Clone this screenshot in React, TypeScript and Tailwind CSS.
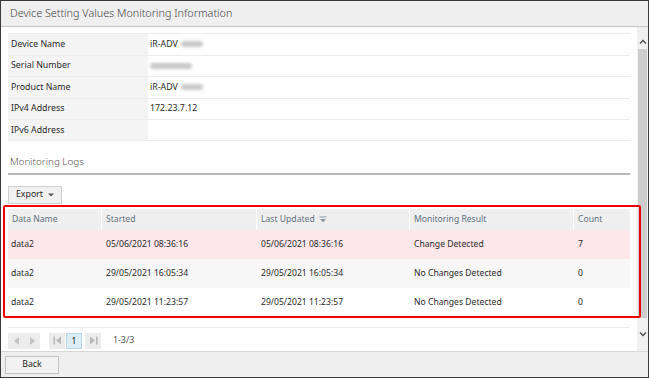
import React from 'react'

// ── Data ──────────────────────────────────────────────────────────────────────

interface InfoRow {
  label: string
  value?: string
  blur?: 'short' | 'long'
}

const infoRows: InfoRow[] = [
  { label: 'Device Name', value: 'iR-ADV', blur: 'short' },
  { label: 'Serial Number', blur: 'long' },
  { label: 'Product Name', value: 'iR-ADV', blur: 'short' },
  { label: 'IPv4 Address', value: '172.23.7.12' },
  { label: 'IPv6 Address' },
]

interface LogRow {
  name: string
  started: string
  updated: string
  result: string
  count: string
}

const logs: LogRow[] = [
  { name: 'data2', started: '05/06/2021 08:36:16', updated: '05/06/2021 08:36:16', result: 'Change Detected', count: '7' },
  { name: 'data2', started: '29/05/2021 16:05:34', updated: '29/05/2021 16:05:34', result: 'No Changes Detected', count: '0' },
  { name: 'data2', started: '29/05/2021 11:23:57', updated: '29/05/2021 11:23:57', result: 'No Changes Detected', count: '0' },
]

const rowBg = ['bg-[#fde7ea]', 'bg-[#f7f7f7]', 'bg-white']

// ── Small pieces ──────────────────────────────────────────────────────────────

function Blurred({ size }: { size: 'short' | 'long' }) {
  return (
    <span
      className={
        size === 'short'
          ? 'inline-block w-[22px] h-[6px] ml-[3px] rounded-full bg-[#c9c9c9] blur-[1.5px]'
          : 'inline-block w-[42px] h-[6px] rounded-full bg-[#c9c9c9] blur-[1.5px]'
      }
    />
  )
}

function SortIcon() {
  return (
    <svg width="8" height="7" viewBox="0 0 8 7" className="ml-[4px]">
      <rect x="0.5" y="0.5" width="7" height="1" fill="#8a96a3" />
      <path d="M1 3 L7 3 L4 6.5 Z" fill="#8a96a3" />
    </svg>
  )
}

function PagerBtn({ children, active }: { children: React.ReactNode; active?: boolean }) {
  return (
    <div
      className={
        active
          ? 'w-[16px] h-[16px] flex items-center justify-center bg-[#dcedf6] border border-[#b5d6e6] text-[8.5px] text-[#222]'
          : 'w-[16px] h-[16px] flex items-center justify-center bg-[#ececec]'
      }
    >
      {children}
    </div>
  )
}

// ── Main ──────────────────────────────────────────────────────────────────────

export default function App() {
  return (
    <div
      className="w-[649px] h-[378px] flex flex-col bg-white border border-[#3a3a3a] overflow-hidden text-[#2a2a2a]"
      style={{ fontFamily: '"Noto Sans", "Open Sans", sans-serif' }}
    >
      {/* Title */}
      <div className="h-[26px] shrink-0 flex items-center px-[9px] bg-[#efefef] border-b border-[#c6c6c6] text-[10.8px] font-light text-[#444]">
        Device Setting Values Monitoring Information
      </div>

      {/* Body */}
      <div className="flex-1 flex min-h-0">
        <div className="relative flex-1 pl-[7px] pr-[7px] pt-[6px]">
          {/* Info table */}
          <div className="text-[8.8px]">
            {infoRows.map((r, i) => (
              <div
                key={r.label}
                className={
                  'flex h-[21.6px] border-t border-[#ececec]' + (i === infoRows.length - 1 ? ' border-b' : '')
                }
              >
                <div className="w-[140px] flex items-center pl-[3px] bg-[#f4f4f4]">{r.label}</div>
                <div className="flex-1 flex items-center pl-[2px]">
                  {r.value}
                  {r.blur && <Blurred size={r.blur} />}
                </div>
              </div>
            ))}
          </div>

          {/* Section heading */}
          <div className="h-[34px] flex items-end pb-[4px] pl-[2px] border-b-2 border-[#b9b9b9] text-[9.9px] font-light text-[#555]">
            Monitoring Logs
          </div>

          {/* Export */}
          <div className="mt-[11px] w-[54px] h-[18px] flex items-center justify-center gap-[5px] bg-[#f1f1f1] border border-[#d0d0d0] text-[8.8px]">
            Export
            <svg width="6" height="4" viewBox="0 0 6 4">
              <path d="M0 0.5 L6 0.5 L3 3.5 Z" fill="#555" />
            </svg>
          </div>

          {/* Logs table */}
          <div className="mt-[5px] text-[8.6px]">
            <div className="flex h-[21px] bg-[#efefef] text-[#5f6f80]">
              <div className="w-[94px] flex items-center pl-[4px] border-r border-white">Data Name</div>
              <div className="w-[155px] flex items-center pl-[4px] border-r border-white">Started</div>
              <div className="w-[153px] flex items-center pl-[4px] border-r border-white">
                Last Updated
                <SortIcon />
              </div>
              <div className="w-[164px] flex items-center pl-[4px] border-r border-white">Monitoring Result</div>
              <div className="flex-1 flex items-center pl-[4px]">Count</div>
            </div>
            {logs.map((l, i) => (
              <div key={i} className={'flex h-[29px] ' + rowBg[i]}>
                <div className="w-[94px] flex items-center pl-[3px]">{l.name}</div>
                <div className="w-[155px] flex items-center pl-[4px]">{l.started}</div>
                <div className="w-[153px] flex items-center pl-[4px]">{l.updated}</div>
                <div className="w-[164px] flex items-center pl-[4px]">{l.result}</div>
                <div className="flex-1 flex items-center pl-[4px]">{l.count}</div>
              </div>
            ))}
          </div>

          {/* Highlight box over the table */}
          <div className="absolute left-[2px] top-[178px] w-[638px] h-[113px] border-2 border-[#f00000] rounded-[2px] pointer-events-none" />

          {/* Pager */}
          <div className="mt-[10px] border-t border-[#ececec] pt-[5px] flex items-center text-[8.8px]">
            <div className="flex">
              <PagerBtn>
                <svg width="7" height="8" viewBox="0 0 7 8"><path d="M6 0 L6 8 L1 4 Z" fill="#c4c4c4" /></svg>
              </PagerBtn>
              <PagerBtn>
                <svg width="7" height="8" viewBox="0 0 7 8"><path d="M1 0 L1 8 L6 4 Z" fill="#c4c4c4" /></svg>
              </PagerBtn>
            </div>
            <div className="flex ml-[9px] gap-[1px]">
              <PagerBtn>
                <svg width="9" height="9" viewBox="0 0 9 9"><rect x="0.5" y="0.5" width="1.5" height="8" fill="#b8b8b8" /><path d="M8 0.5 L8 8.5 L3 4.5 Z" fill="#b8b8b8" /></svg>
              </PagerBtn>
              <PagerBtn active>1</PagerBtn>
              <div className="w-[1px]" />
              <PagerBtn>
                <svg width="9" height="9" viewBox="0 0 9 9"><path d="M1 0.5 L1 8.5 L6 4.5 Z" fill="#b8b8b8" /><rect x="7" y="0.5" width="1.5" height="8" fill="#b8b8b8" /></svg>
              </PagerBtn>
            </div>
            <span className="ml-[12px] text-[#555]">1-3/3</span>
          </div>
        </div>

        {/* Scrollbar */}
        <div className="w-[11px] shrink-0 flex flex-col items-center bg-[#f0f0f0]">
          <div className="h-[22px] flex items-end pb-[5px]">
            <svg width="8" height="5" viewBox="0 0 8 5"><path d="M1 4.5 L4 1.5 L7 4.5" stroke="#555" strokeWidth="1.5" fill="none" /></svg>
          </div>
          <div className="w-[9px] h-[269px] bg-[#cdcdcd]" />
          <div className="flex-1 flex items-center">
            <svg width="8" height="5" viewBox="0 0 8 5"><path d="M1 0.5 L4 3.5 L7 0.5" stroke="#555" strokeWidth="1.5" fill="none" /></svg>
          </div>
        </div>
      </div>

      {/* Footer */}
      <div className="h-[26px] shrink-0 flex items-center px-[4px] bg-[#efefef] border-t border-[#d6d6d6]">
        <div className="w-[54px] h-[18px] flex items-center justify-center bg-[#f2f2f2] border border-[#c3c3c3] text-[8.8px]">
          Back
        </div>
      </div>
    </div>
  )
}
